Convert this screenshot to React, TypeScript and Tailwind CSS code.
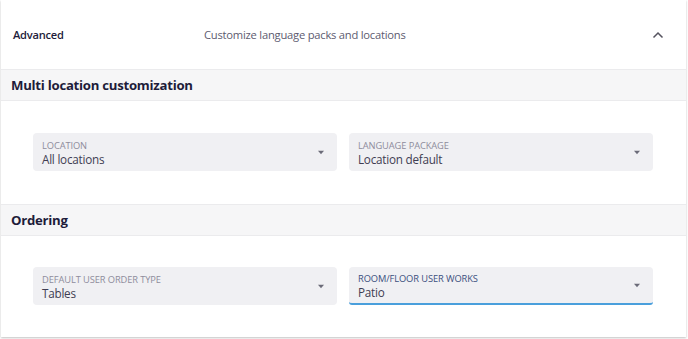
import React from "react";

function Caret() {
  return (
    <svg width="8" height="5" viewBox="0 0 8 5" className="shrink-0">
      <path d="M1 0.8 L7 0.8 L4 4.2 Z" fill="#6b6b78" />
    </svg>
  );
}

function Field({ label, value, active }: { label: string; value: string; active?: boolean }) {
  return (
    <div
      className={
        "h-[38px] rounded-[4px] bg-[#f0f0f3] flex items-center pl-[9px] pr-[12px] " +
        (active ? "border-b-2 border-[#4a9fdc] rounded-b-[3px]" : "")
      }
    >
      <div className="flex-1 flex flex-col leading-none pt-[2px]">
        <span
          className={
            "text-[9.3px] uppercase leading-[11px] tracking-[-0.01em] " +
            (active ? "text-[#3b4f7e]" : "text-[#8e8c9c]")
          }
        >
          {label}
        </span>
        <span className="text-[11.7px] leading-[15px] tracking-[-0.02em] text-[#3f3d52] mt-[1px]">{value}</span>
      </div>
      <Caret />
    </div>
  );
}

function SectionBand({ title }: { title: string }) {
  return (
    <div className="h-[32px] bg-[#f6f6f7] border-y border-[#ebebed] flex items-center pl-[10px] pt-[2px]">
      <span className="text-[13.2px] font-bold tracking-[-0.02em] text-[#1e1c3a]">{title}</span>
    </div>
  );
}

export default function App() {
  return (
    <div
      className="w-[688px] h-[339px] bg-white pl-[1px]"
      style={{ fontFamily: '"Open Sans", "Noto Sans", sans-serif' }}
    >
      <div className="w-[685px] h-[337px] bg-white shadow-[0_1px_2px_rgba(0,0,0,0.25)] flex flex-col overflow-hidden">
        <div className="h-[69px] flex items-center pl-[12px] pr-[22px] pt-[1px]">
          <span className="w-[191px] text-[11.1px] font-semibold tracking-[-0.02em] text-[#1e1c3a]">Advanced</span>
          <span className="flex-1 text-[11.2px] tracking-[-0.02em] text-[#5d5b70]">Customize language packs and locations</span>
          <svg width="12" height="8" viewBox="0 0 12 8">
            <path d="M1.5 6.5 L6 2 L10.5 6.5" stroke="#55535f" strokeWidth="1.5" fill="none" />
          </svg>
        </div>
        <SectionBand title="Multi location customization" />
        <div className="grid grid-cols-2 gap-[12px] pl-[32px] pr-[33px] pt-[32px] pb-[33px]">
          <Field label="Location" value="All locations" />
          <Field label="Language package" value="Location default" />
        </div>
        <SectionBand title="Ordering" />
        <div className="grid grid-cols-2 gap-[12px] pl-[32px] pr-[33px] pt-[31px]">
          <Field label="Default user order type" value="Tables" />
          <Field label="Room/floor user works" value="Patio" active />
        </div>
      </div>
    </div>
  );
}
